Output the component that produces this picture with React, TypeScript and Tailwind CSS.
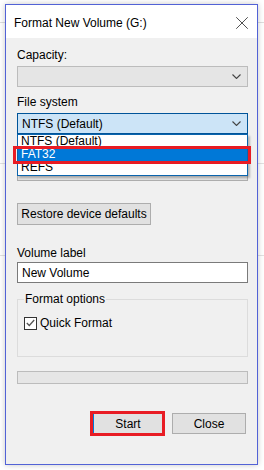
import { X } from "lucide-react";

const font = { fontFamily: '"Liberation Sans", Arial, sans-serif' };

function Chevron() {
  return (
    <svg width="9" height="5" viewBox="0 0 9 5" className="shrink-0">
      <polyline points="0.5,0.5 4.5,4.5 8.5,0.5" fill="none" stroke="#444" strokeWidth="1.1" />
    </svg>
  );
}

function Combo({ value, active, disabled }: { value?: string; active?: boolean; disabled?: boolean }) {
  return (
    <div
      className={
        "mt-[3px] flex h-[21px] w-[231px] items-center justify-between pl-[4px] pr-[6px] border " +
        (active
          ? "border-[#005499] bg-[#cce4f7]"
          : disabled
            ? "border-[#bcbcbc] bg-[#e5e5e5]"
            : "border-[#adadad] bg-[#e1e1e1]")
      }
    >
      <span className="text-[12px] leading-[16px] text-black">{value}</span>
      <Chevron />
    </div>
  );
}

export default function App() {
  return (
    <div className="relative h-[470px] w-[264px] overflow-hidden bg-white" style={font}>
      {/* faint lines of the window behind */}
      <div className="absolute left-0 top-[22px] h-px w-full bg-[#dedede]" />
      <div className="absolute left-0 top-[163px] h-px w-full bg-[#e2e2e2]" />
      <div className="absolute left-0 top-[255px] h-px w-full bg-[#e2e2e2]" />

      <div className="relative ml-[5px] mt-[4px] flex h-[461px] w-[253px] flex-col border border-[#5262d6] shadow-[0_0_6px_rgba(0,0,0,0.22)]">
        <div className="flex h-[33px] items-center justify-between bg-white pl-[8px] pr-[4px] pt-[2px]">
          <span className="text-[12px] text-black">Format New Volume (G:)</span>
          <X size={22} strokeWidth={0.8} color="#111" />
        </div>

        <div className="flex flex-1 flex-col bg-[#f0f0f0] pl-[11px] text-[12px] leading-[16px] text-black">
          <div className="mt-[9px]">Capacity:</div>
          <Combo disabled />

          <div className="mt-[7px]">File system</div>
          <Combo value="NTFS (Default)" active />

          {/* allocation unit size row, hidden under the open list */}
          <div className="mt-[7px] h-[16px]" />
          <Combo />

          <button className="mt-[22px] h-[22px] w-[134px] border border-[#adadad] bg-[#e1e1e1] text-[12px] text-black">
            Restore device defaults
          </button>

          <div className="mt-[20px]">Volume label</div>
          <div className="mt-[1px] flex h-[21px] w-[231px] items-center border border-[#7a7a7a] bg-white pl-[4px]">
            New Volume
          </div>

          <fieldset className="mt-[8px] h-[66px] w-[231px] border border-[#dcdcdc] pl-[6px]">
            <legend className="px-[1px]">Format options</legend>
            <label className="mt-[8px] flex items-center gap-[3px]">
              <span className="flex h-[13px] w-[13px] items-center justify-center border border-[#333] bg-white">
                <svg width="9" height="8" viewBox="0 0 9 8">
                  <polyline points="0.8,4 3.3,6.5 8.2,1" fill="none" stroke="#555" strokeWidth="1.3" />
                </svg>
              </span>
              Quick Format
            </label>
          </fieldset>

          <div className="mt-[14px] h-[13px] w-[231px] border border-[#bcbcbc] bg-[#e6e6e6]" />

          <div className="mt-[29px] flex w-[229px] justify-end gap-[9px]">
            <button className="h-[21px] w-[70px] border border-[#0078d7] bg-[#e1e1e1] text-[12px] text-black">
              Start
            </button>
            <button className="h-[21px] w-[74px] border border-[#adadad] bg-[#e1e1e1] text-[12px] text-black">
              Close
            </button>
          </div>
        </div>
      </div>

      {/* open dropdown list */}
      <div className="absolute left-[17px] top-[134px] flex w-[231px] flex-col border border-[#0a64ad] bg-white text-[12px] leading-[13px] text-black shadow-[2px_2px_2px_rgba(0,0,0,0.25)]">
        <div className="h-[13px] pl-[3px]">NTFS (Default)</div>
        <div className="h-[13px] bg-[#0078d7] pl-[3px] text-white">FAT32</div>
        <div className="h-[14px] pl-[3px]">REFS</div>
      </div>

      {/* red highlight boxes */}
      <div className="absolute left-[13px] top-[146px] h-[18px] w-[238px] border-[3px] border-[#e81c24]" />
      <div className="absolute left-[90px] top-[411px] h-[25px] w-[75px] border-[3px] border-[#e81c24]" />
    </div>
  );
}
